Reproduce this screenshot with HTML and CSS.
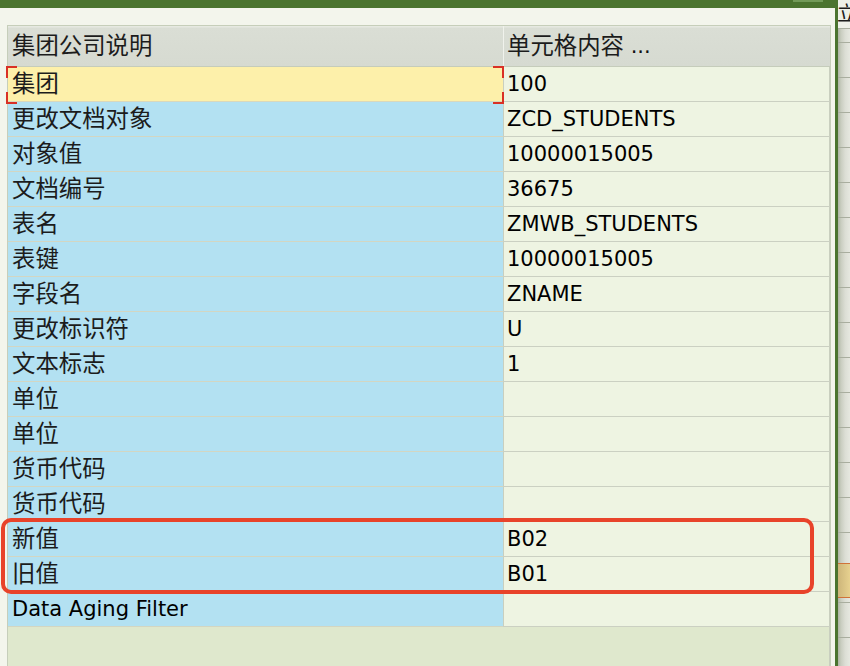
FILE: index.html
```html
<!DOCTYPE html>
<html>
<head>
<meta charset="utf-8">
<link rel="stylesheet" href="styles.css">
</head>
<body>
<div class="screen">
  <div class="dialog">
    <div class="titlebar"><span class="tb-btn"></span></div>
    <div class="body">
      <div class="table">
        <div class="hd"><span class="zh">集团公司说明</span></div>
        <div class="hd hd-r"><span class="zh">单元格内容</span>&nbsp;...</div>

        <div class="c l sel"><span class="zh">集团</span></div><div class="c r">100</div>
        <div class="c l"><span class="zh">更改文档对象</span></div><div class="c r">ZCD_STUDENTS</div>
        <div class="c l"><span class="zh">对象值</span></div><div class="c r">10000015005</div>
        <div class="c l"><span class="zh">文档编号</span></div><div class="c r">36675</div>
        <div class="c l"><span class="zh">表名</span></div><div class="c r">ZMWB_STUDENTS</div>
        <div class="c l"><span class="zh">表键</span></div><div class="c r">10000015005</div>
        <div class="c l"><span class="zh">字段名</span></div><div class="c r">ZNAME</div>
        <div class="c l"><span class="zh">更改标识符</span></div><div class="c r">U</div>
        <div class="c l"><span class="zh">文本标志</span></div><div class="c r">1</div>
        <div class="c l"><span class="zh">单位</span></div><div class="c r"></div>
        <div class="c l"><span class="zh">单位</span></div><div class="c r"></div>
        <div class="c l"><span class="zh">货币代码</span></div><div class="c r"></div>
        <div class="c l"><span class="zh">货币代码</span></div><div class="c r"></div>
        <div class="c l"><span class="zh">新值</span></div><div class="c r">B02</div>
        <div class="c l"><span class="zh">旧值</span></div><div class="c r">B01</div>
        <div class="c l">Data Aging Filter</div><div class="c r"></div>

        <div class="filler"></div>

        <div class="focus">
          <i class="k tl"></i><i class="k bl"></i><i class="k tr"></i><i class="k br"></i>
        </div>
        <div class="mark"></div>
      </div>
    </div>
  </div>
  <div class="behind">
    <div class="behind-top"><span class="zh">立</span></div>
    <div class="behind-rows"><div class="band"></div></div>
  </div>
</div>
</body>
</html>
```

FILE: styles.css
```css
html, body {
  margin: 0;
  padding: 0;
  height: 666px;
  overflow: hidden;
  background: #f3f5ec;
}

.screen {
  display: flex;
  width: 850px;
  height: 666px;
  font-family: "DejaVu Sans", "Noto Sans CJK SC", sans-serif;
  font-size: 21px;
  color: #000;
}

.zh {
  font-family: "Noto Sans CJK SC", sans-serif;
  font-size: 23.4px;
  line-height: 1;
  color: #1c1c1c;
  position: relative;
  top: -1px;
}

.dialog {
  width: 835px;
  height: 666px;
  display: flex;
  flex-direction: column;
  background: #f3f5ec;
  border-right: 3px solid #4b742f;
}

.titlebar {
  height: 8px;
  background: #4b742f;
  display: flex;
  justify-content: flex-end;
}

.tb-btn {
  width: 30px;
  height: 2px;
  margin-right: 12px;
  background: #729a58;
}

.body {
  flex: 1;
  display: flex;
  flex-direction: column;
  padding: 17px 4px 0 7px;
  min-height: 0;
}

.table {
  position: relative;
  flex: 1;
  display: grid;
  grid-template-columns: 495px 1fr;
  grid-template-rows: 41px repeat(16, 35px) 1fr;
  border: 1px solid #c6ceba;
  border-bottom: none;
}

.hd {
  display: flex;
  align-items: center;
  padding-left: 4px;
  background: linear-gradient(to bottom, #e6e9e1 0, #e6e9e1 1px, #dadeD5 2px, #d6dad1 100%);
  border-bottom: 1px solid #c5ccbb;
}

.hd-r {
  border-left: 1px solid #f0f2ec;
  padding-left: 3px;
  color: #111;
}

.c {
  display: flex;
  align-items: center;
  box-sizing: border-box;
  height: 35px;
  white-space: nowrap;
}

.l {
  background: #b3e1f2;
  padding-left: 4px;
  border-bottom: 1px solid #d3d6c2;
}

.l.sel {
  background: #fdf0aa;
  border-bottom-color: #d9d8bc;
}

.r {
  background: #eef4e2;
  padding-left: 3px;
  border-left: 1px solid #c9cfbf;
  border-right: 1px solid #c9cfbf;
  border-bottom: 1px solid #cbd0c2;
}

.filler {
  grid-column: 1 / -1;
  background: #dfe8cd;
  border-right: 1px solid #c9cfbf;
}

/* focus brackets on the selected cell */
.focus {
  position: absolute;
  left: -2px;
  top: 40px;
  width: 498px;
  height: 38px;
  pointer-events: none;
}

.k {
  position: absolute;
  width: 9px;
  height: 10px;
  border: 0 solid #d93025;
}

.k.tl { left: 0; top: 0; border-left-width: 2px; border-top-width: 2px; }
.k.bl { left: 0; bottom: 0; border-left-width: 2px; border-bottom-width: 2px; }
.k.tr { right: 0; top: 0; border-right-width: 2px; border-top-width: 2px; }
.k.br { right: 0; bottom: 0; border-right-width: 2px; border-bottom-width: 2px; }

/* red annotation rectangle */
.mark {
  position: absolute;
  left: -7px;
  top: 492px;
  width: 813px;
  height: 76px;
  box-sizing: border-box;
  border: 4px solid #e8432a;
  border-radius: 10px;
  pointer-events: none;
}

/* window behind the dialog */
.behind {
  flex: 1;
  display: flex;
  flex-direction: column;
  overflow: hidden;
}

.behind-top {
  height: 28px;
  background: #eef0e8;
  overflow: hidden;
  border-bottom: 1px solid #a9ae9f;
}

.behind-top .zh {
  display: block;
  margin-left: -1px;
  margin-top: 3px;
  font-size: 20px;
  line-height: 22px;
}

.behind-rows {
  position: relative;
  flex: 1;
  background:
    repeating-linear-gradient(to bottom, transparent 0, transparent 34px, #a9ae9f 34px, #a9ae9f 35px),
    linear-gradient(to right, #adb4a3 0, #c9cdc0 25%, #dcded5 60%, #e6e8e0 100%);
  background-position: 0 -21px, 0 0;
}

.band {
  position: absolute;
  left: 0;
  right: 0;
  top: 534px;
  height: 33px;
  background: linear-gradient(to right, #cdb57a, #e7d18f);
  border-top: 1px solid #d0733a;
  border-bottom: 1px solid #d0733a;
}
```
